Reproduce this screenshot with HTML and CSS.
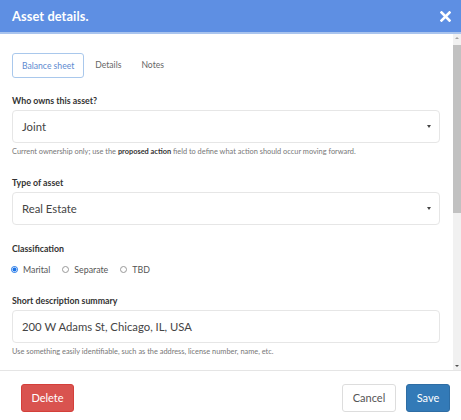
FILE: index.html
```html
<!DOCTYPE html>
<html>
<head>
<meta charset="utf-8">
<link rel="stylesheet" href="styles.css">
</head>
<body>
<div class="modal">
  <div class="header">
    <span class="title">Asset details.</span>
    <svg class="close" width="11" height="11" viewBox="0 0 11 11"><path d="M1.5 1.5 L9.5 9.5 M9.5 1.5 L1.5 9.5" stroke="#fff" stroke-width="2.6" stroke-linecap="square"/></svg>
  </div>
  <div class="main">
    <div class="content">
      <div class="tabs">
        <span class="tab active">Balance sheet</span>
        <span class="tab">Details</span>
        <span class="tab">Notes</span>
      </div>

      <div class="label first">Who owns this asset?</div>
      <div class="control select"><span>Joint</span><span class="caret"></span></div>
      <div class="help">Current ownership only; use the <b>proposed action</b> field to define what action should occur moving forward.</div>

      <div class="label gap20">Type of asset</div>
      <div class="control select"><span>Real Estate</span><span class="caret"></span></div>

      <div class="label gap18">Classification</div>
      <div class="radios">
        <label class="radio"><span class="dot checked"></span>Marital</label>
        <label class="radio"><span class="dot"></span>Separate</label>
        <label class="radio"><span class="dot"></span>TBD</label>
      </div>

      <div class="label gap20">Short description summary</div>
      <div class="control"><span>200 W Adams St, Chicago, IL, USA</span></div>
      <div class="help">Use something easily identifiable, such as the address, license number, name, etc.</div>
    </div>
    <div class="scrollbar">
      <div class="arrow up"></div>
      <div class="thumb"></div>
      <div class="track"></div>
      <div class="arrow down"></div>
    </div>
  </div>
  <div class="footer">
    <button class="btn delete">Delete</button>
    <div class="right">
      <button class="btn cancel">Cancel</button>
      <button class="btn save">Save</button>
    </div>
  </div>
</div>
</body>
</html>
```

FILE: styles.css
```css
html, body {
  margin: 0;
  padding: 0;
  background: #fff;
}
body {
  font-family: "Lato", "Liberation Sans", sans-serif;
  color: #333;
}
.modal {
  width: 461px;
  height: 420px;
  overflow: hidden;
  background: #fff;
}
.header {
  height: 32px;
  background: #5e8fe3;
  border-bottom: 2px solid #a9c4ee;
  display: flex;
  align-items: center;
  justify-content: space-between;
  padding: 0 10px 0 12px;
  box-sizing: content-box;
}
.title {
  color: #fff;
  font-weight: 700;
  font-size: 12.8px;
  letter-spacing: 0.1px;
}
.close {
  display: block;
}
.main {
  display: flex;
  height: 336px;
}
.content {
  flex: 1;
  overflow: hidden;
  padding: 19px 13px 0 12px;
}
.tabs {
  display: flex;
  align-items: center;
  height: 25px;
}
.tab {
  font-size: 8.6px;
  color: #666;
  padding: 0 10px;
  height: 25px;
  line-height: 25px;
  box-sizing: border-box;
}
.tab.active {
  color: #5d8ad0;
  border: 1px solid #a9c8ec;
  border-radius: 3px;
  padding: 0 9px;
  margin-right: 1px;
}
.label {
  font-weight: 700;
  font-size: 8.8px;
  line-height: 12px;
  color: #333;
  margin-bottom: 3px;
}
.label.first { margin-top: 17px; }
.label.gap20 { margin-top: 20px; }
.label.gap18 { margin-top: 18px; }
.control {
  height: 33px;
  border: 1px solid #e6e6e6;
  border-radius: 4px;
  box-sizing: border-box;
  display: flex;
  align-items: center;
  justify-content: space-between;
  padding: 0 8px 0 9px;
  font-size: 11.3px;
  color: #444;
}
.caret {
  width: 0;
  height: 0;
  border-left: 2.5px solid transparent;
  border-right: 2.5px solid transparent;
  border-top: 3px solid #444;
}
.help {
  font-size: 7.4px;
  line-height: 10px;
  color: #777;
  margin-top: 4px;
  white-space: nowrap;
}
.help b {
  color: #333;
  font-weight: 700;
}
.radios {
  display: flex;
  align-items: center;
  height: 12px;
  margin-top: 8px;
  gap: 13px;
}
.radio {
  display: flex;
  align-items: center;
  font-size: 8.8px;
  color: #555;
  gap: 5px;
}
.dot {
  width: 7px;
  height: 7px;
  border-radius: 50%;
  border: 1px solid #999;
  box-sizing: border-box;
  margin-left: -1px;
}
.dot.checked {
  border: 1px solid #1a73e8;
  background: radial-gradient(circle, #1a73e8 0 1.8px, #fff 2.2px);
}
.scrollbar {
  width: 8px;
  background: #f1f1f1;
  display: flex;
  flex-direction: column;
  align-items: stretch;
}
.arrow {
  height: 8px;
  position: relative;
}
.arrow::after {
  content: "";
  position: absolute;
  left: 2px;
  top: 3px;
  border-left: 2px solid transparent;
  border-right: 2px solid transparent;
}
.arrow.up::after {
  border-bottom: 2px solid #a3a3a3;
}
.arrow.down::after {
  border-top: 2px solid #505050;
}
.thumb {
  height: 168px;
  background: #c1c1c1;
  margin-top: 3px;
}
.track {
  flex: 1;
}
.footer {
  border-top: 1px solid #e5e5e5;
  display: flex;
  justify-content: space-between;
  align-items: flex-start;
  padding: 13px 11px 0 21px;
}
.right {
  display: flex;
  gap: 10px;
}
.btn {
  font-family: "Lato", "Liberation Sans", sans-serif;
  font-size: 11px;
  line-height: 26px;
  height: 28px;
  border-radius: 3px;
  padding: 0;
  box-sizing: border-box;
  cursor: pointer;
}
.delete {
  width: 53px;
  background: #d9534f;
  color: #fff;
  border: 1px solid #d43f3a;
}
.cancel {
  width: 54px;
  background: #fff;
  color: #555;
  border: 1px solid #ddd;
}
.save {
  width: 44px;
  background: #337ab7;
  color: #fff;
  border: 1px solid #2e6da4;
}
```
